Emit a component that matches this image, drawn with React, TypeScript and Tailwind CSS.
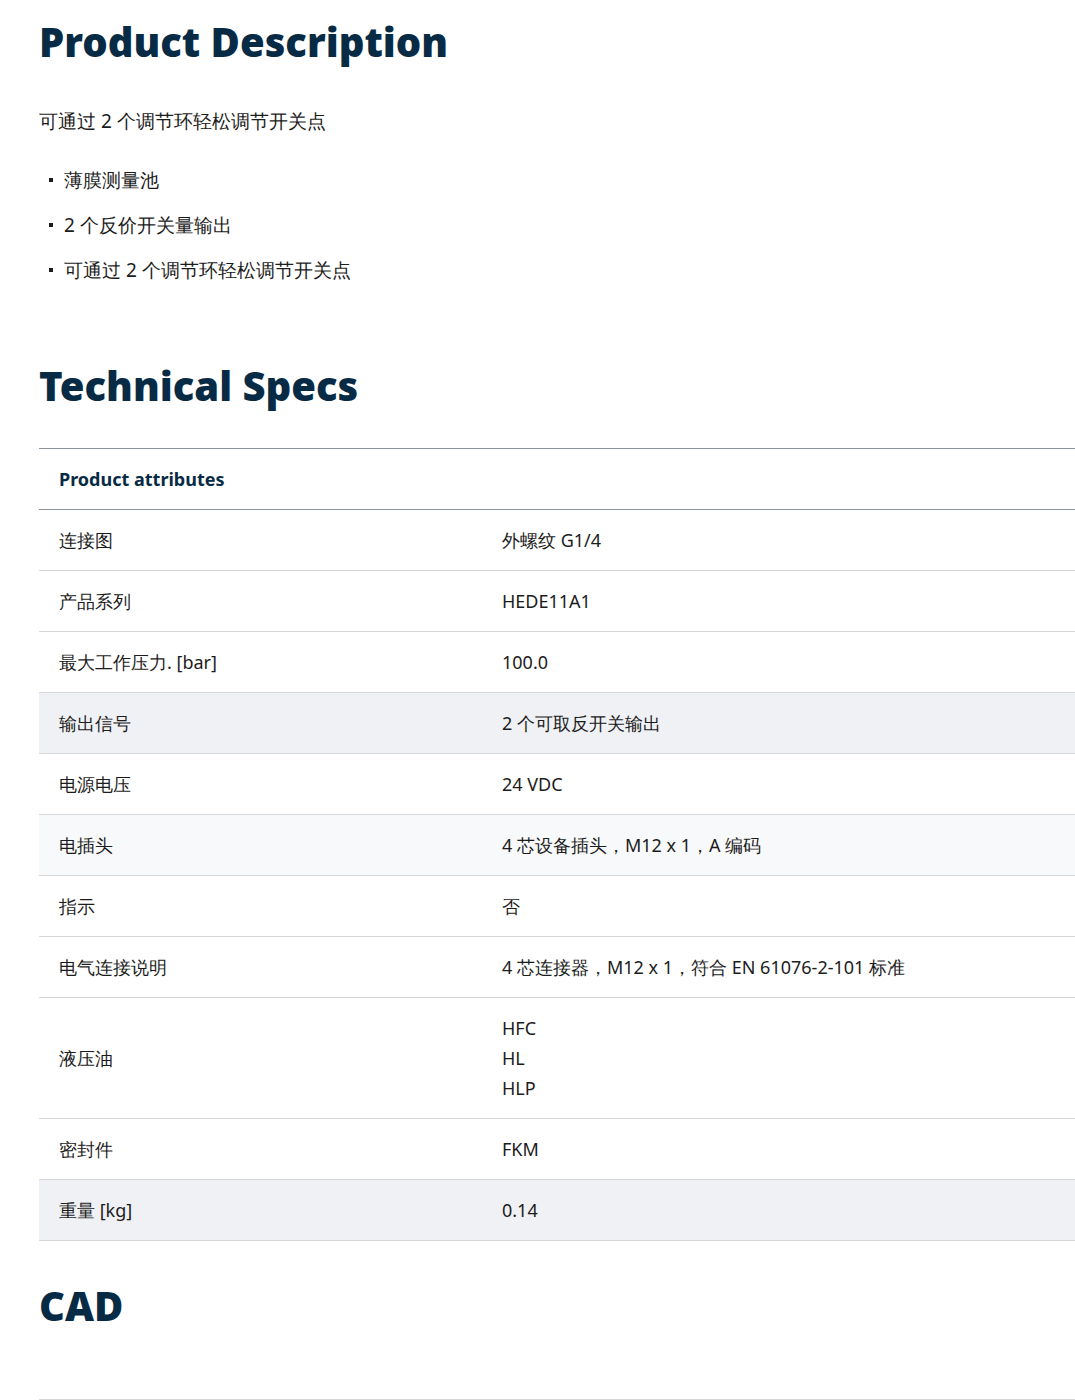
import React from 'react'

const rows: { label: string; value: string[]; bg?: string }[] = [
  { label: '连接图', value: ['外螺纹 G1/4'] },
  { label: '产品系列', value: ['HEDE11A1'] },
  { label: '最大工作压力. [bar]', value: ['100.0'] },
  { label: '输出信号', value: ['2 个可取反开关输出'], bg: 'bg-[#eff1f4]' },
  { label: '电源电压', value: ['24 VDC'] },
  { label: '电插头', value: ['4 芯设备插头，M12 x 1，A 编码'], bg: 'bg-[#f8f9fa]' },
  { label: '指示', value: ['否'] },
  { label: '电气连接说明', value: ['4 芯连接器，M12 x 1，符合 EN 61076-2-101 标准'] },
  { label: '液压油', value: ['HFC', 'HL', 'HLP'] },
  { label: '密封件', value: ['FKM'] },
  { label: '重量 [kg]', value: ['0.14'], bg: 'bg-[#eff1f4]' },
]

const bullets = ['薄膜测量池', '2 个反价开关量输出', '可通过 2 个调节环轻松调节开关点']

export default function App() {
  return (
    <div className="pl-[39px] pt-[17px] text-[#1c1c1c] text-[18px] font-['Inter','Noto_Sans_CJK_SC',sans-serif]">
      <h1 className="text-[40px] leading-[50px] font-black text-[#082b45]">Product Description</h1>
      <p className="mt-[40px] leading-[28px] text-[19px]">可通过 2 个调节环轻松调节开关点</p>
      <ul className="mt-[31px] flex flex-col gap-[17px] text-[19px]">
        {bullets.map((b) => (
          <li key={b} className="flex items-center leading-[28px]">
            <span className="ml-[10px] mr-[11px] w-[4px] h-[4px] bg-[#1c1c1c]" />
            {b}
          </li>
        ))}
      </ul>
      <h2 className="mt-[77px] text-[40px] leading-[50px] font-black text-[#082b45]">Technical Specs</h2>
      <div className="mt-[37px] border-t border-[#8a949c]">
        <div className="h-[61px] flex items-center px-[20px] font-bold text-[#082b45] border-b border-[#8a949c]">Product attributes</div>
        {rows.map((r) => (
          <div key={r.label} className={`flex items-center border-b border-[#d6d9dc] ${r.bg ?? ''} ${r.value.length > 1 ? 'py-[15px]' : 'h-[61px]'}`}>
            <div className="w-[463px] pl-[20px]">{r.label}</div>
            <div className="flex flex-col leading-[30px]">
              {r.value.map((v) => (
                <span key={v}>{v}</span>
              ))}
            </div>
          </div>
        ))}
      </div>
      <h2 className="mt-[40px] text-[40px] leading-[50px] font-black text-[#082b45]">CAD</h2>
      <div className="mt-[68px] border-t border-[#d6d9dc]" />
    </div>
  )
}
